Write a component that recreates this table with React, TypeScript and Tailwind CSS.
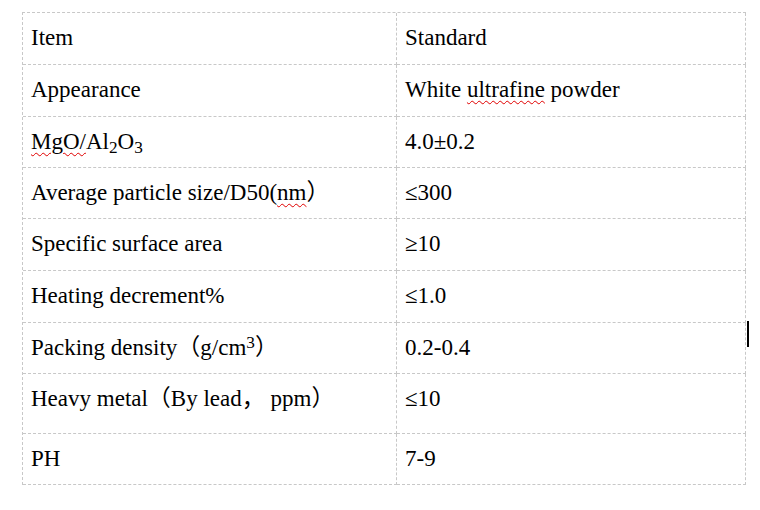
import type { ReactNode } from "react";

interface Row {
  item: ReactNode;
  standard: ReactNode;
  height: string;
}

const squiggle = "underline decoration-wavy decoration-[#e00000] decoration-1 underline-offset-[3px]";

const rows: Row[] = [
  { item: "Item", standard: "Standard", height: "h-[52px]" },
  {
    item: "Appearance",
    standard: (
      <>
        White <span className={squiggle}>ultrafine</span> powder
      </>
    ),
    height: "h-[52px]",
  },
  {
    item: (
      <>
        <span className={squiggle}>MgO/</span>Al<sub>2</sub>O<sub>3</sub>
      </>
    ),
    standard: "4.0±0.2",
    height: "h-[51px]",
  },
  {
    item: (
      <>
        Average particle size/D50(<span className={squiggle}>nm</span>）
      </>
    ),
    standard: "≤300",
    height: "h-[51px]",
  },
  { item: "Specific surface area", standard: "≥10", height: "h-[52px]" },
  { item: "Heating decrement%", standard: "≤1.0", height: "h-[52px]" },
  {
    item: (
      <>
        Packing density（g/cm<sup className="top-[-0.4em]">3</sup>）
      </>
    ),
    standard: "0.2-0.4",
    height: "h-[51px]",
  },
  { item: "Heavy metal（By lead， ppm）", standard: "≤10", height: "h-[60px]" },
  { item: "PH", standard: "7-9", height: "h-[51px]" },
];

export default function App() {
  return (
    <div
      className="w-[760px] h-[510px] bg-white text-black pl-[22px] pt-[12px]"
      style={{ fontFamily: '"Liberation Serif", "Times New Roman", "Noto Sans CJK SC", serif' }}
    >
      <div className="relative w-[724px]">
        <div className="grid grid-cols-[374px_349px] border-l border-t border-dashed border-[#c8c8c8]">
          {rows.map((row, i) => (
            <div key={i} className="contents">
              <div
                className={`${row.height} border-r border-b border-dashed border-[#c8c8c8] pl-2 pt-[12px] text-[23px] leading-[26px]`}
              >
                {row.item}
              </div>
              <div
                className={`${row.height} border-r border-b border-dashed border-[#c8c8c8] pl-2 pt-[12px] text-[23px] leading-[26px]`}
              >
                {row.standard}
              </div>
            </div>
          ))}
        </div>
        {/* text cursor */}
        <div className="absolute left-[725px] top-[309px] w-[2px] h-[26px] bg-black" />
      </div>
    </div>
  );
}
